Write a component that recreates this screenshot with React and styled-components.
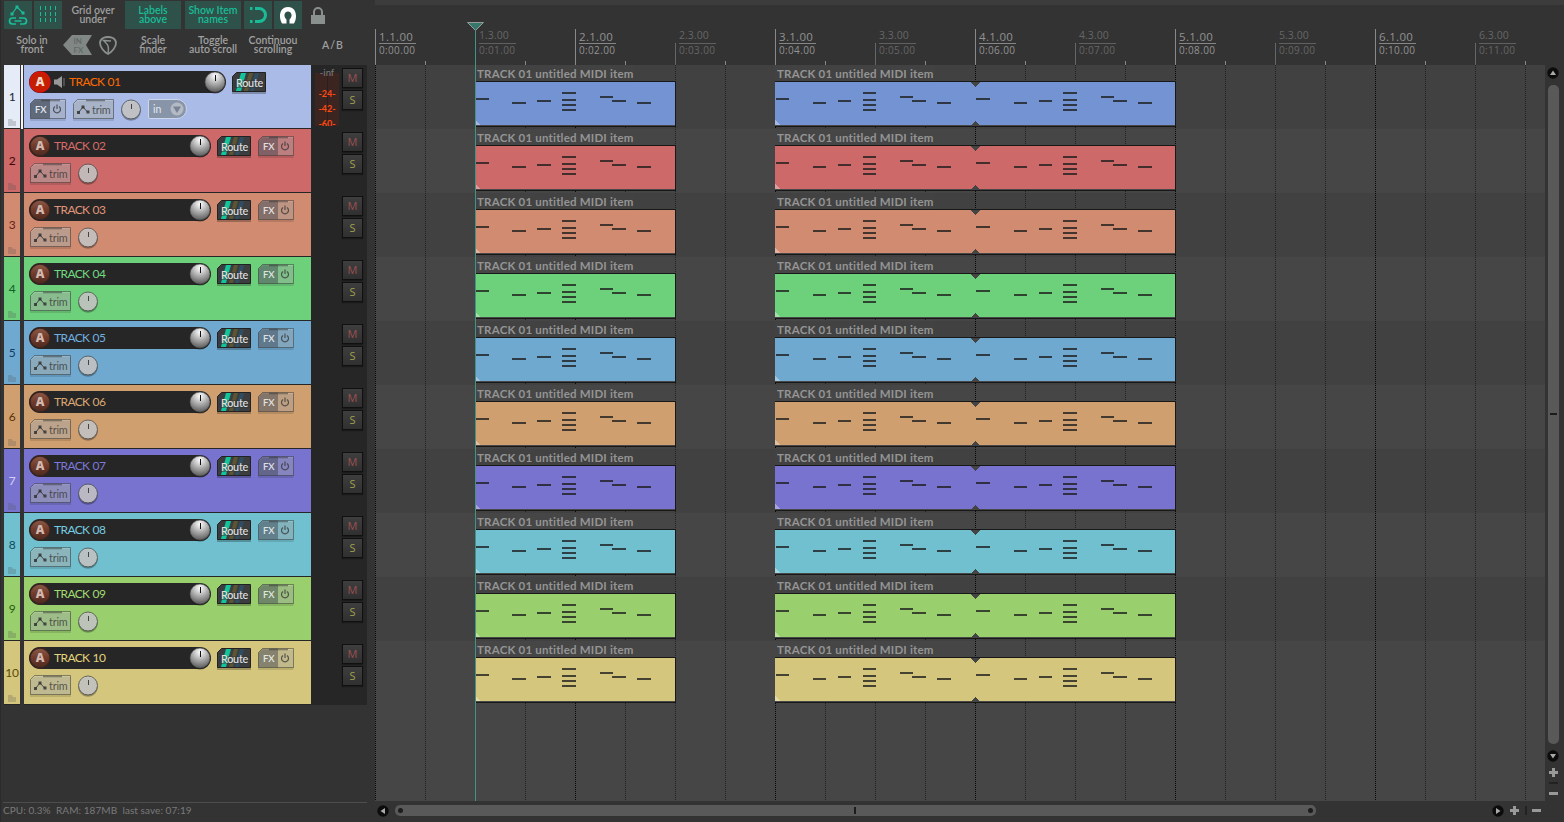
import React from "react";
import styled, { createGlobalStyle } from "styled-components";

const GlobalStyle = createGlobalStyle`
	* {
		box-sizing: border-box;
	}
	body {
		margin: 0;
		background: #333;
		overflow: hidden;
	}
	svg {
		display: block;
		flex: none;
	}
`;

const AppCSS = styled.div`
	width: 1564px;
	height: 822px;
	display: flex;
	overflow: hidden;
	background: #333;
	border-left: 1px solid #2b2b2b;
	font-family: Lato, "Liberation Sans", sans-serif;
	white-space: nowrap;
`;

const LeftPanel = styled.div`
	width: 374px;
	flex: none;
	display: flex;
	flex-direction: column;
`;

// ---------- toolbar ----------

const Toolbar = styled.div`
	height: 65px;
	padding: 1px 0 0 3px;
	display: flex;
	flex-direction: column;
	gap: 2px;
`;

const ToolbarRow = styled.div`
	display: flex;
	height: 28px;
`;

const ToolButton = styled.div`
	width: ${(p) => p.$w || 28}px;
	margin-right: ${(p) => (p.$gap === undefined ? 2 : p.$gap)}px;
	height: 28px;
	flex: none;
	display: flex;
	flex-direction: column;
	align-items: center;
	justify-content: center;
	background: ${(p) => (p.$on ? "#2e5149" : "transparent")};
	color: ${(p) => (p.$on ? "#1abc98" : "#a0a0a0")};
	font-size: 10.5px;
	font-weight: 600;
	line-height: 9px;
	letter-spacing: ${(p) => p.$ls || 0}px;
`;

// ---------- track control panel ----------

const TrackList = styled.div`
	display: flex;
	flex-direction: column;
	height: 640px;
	padding-left: 3px;
`;

const TrackRow = styled.div`
	display: flex;
	width: 363px;
	height: 64px;
	background: #262626;
`;

const NumberCell = styled.div`
	width: 16px;
	height: 63px;
	position: relative;
	display: flex;
	align-items: center;
	justify-content: center;
	background: ${(p) => p.$bg};
	color: ${(p) => p.$color};
	font-size: 12px;
	letter-spacing: -0.3px;
`;

const Folder = styled.svg`
	position: absolute;
	left: 4px;
	bottom: 2px;
`;

const Divider = styled.div`
	width: 4px;
	height: 64px;
	background: ${(p) => (p.$selected ? "#f2f4fa" : "#333")};
	border-left: 1px solid #333;
	border-right: 1px solid #333;
`;

const TrackBody = styled.div`
	width: 287px;
	height: 63px;
	padding: 6px 0 0 5px;
	background: ${(p) => p.$bg};
`;

const BodyRow = styled.div`
	display: flex;
	height: ${(p) => p.$h}px;
`;

const NameBar = styled.div`
	width: ${(p) => p.$w}px;
	height: 22px;
	display: flex;
	align-items: center;
	justify-content: space-between;
	border-radius: 11px;
	background: #262626;
`;

const NameLeft = styled.div`
	display: flex;
	align-items: center;
	gap: 3px;
	color: ${(p) => p.$color};
	font-size: 12px;
`;

const TrackName = styled.span`
	padding-bottom: 2px;
	letter-spacing: -0.6px;
	word-spacing: 0.6px;
`;

const ChamferButton = styled.div`
	position: relative;
	width: ${(p) => p.$w}px;
	height: 20px;
	margin: ${(p) => p.$m || "0"};
	flex: none;
	display: flex;
	align-items: center;
	color: ${(p) => p.$color};
	font-size: ${(p) => p.$size || 11}px;
`;

const Frame = styled.svg`
	position: absolute;
	inset: 0;
	overflow: visible;
`;

const ButtonText = styled.span`
	position: relative;
	padding-left: ${(p) => p.$x}px;
	padding-top: 1px;
	letter-spacing: ${(p) => p.$ls || 0}px;
	font-weight: ${(p) => p.$weight || 400};
`;

const ButtonIcon = styled.svg`
	position: relative;
	margin-left: ${(p) => p.$x}px;
`;

const InputSelect = styled.div`
	width: 39px;
	height: 20px;
	margin-left: 6px;
	padding: 0 2px 0 4px;
	display: flex;
	align-items: center;
	justify-content: space-between;
	border: 1px solid #ccd7ee;
	border-radius: 2px 10px 10px 2px;
	background: #8894a8;
	color: #e3e8f2;
	font-size: 10.5px;
`;

const MeterStrip = styled.div`
	width: 30px;
	height: 64px;
	padding: 1px 0 0 4px;
`;

const MeterPeak = styled.div`
	width: 24px;
	height: 13px;
	margin-bottom: -6px;
	color: #777;
	font-size: 9.5px;
	font-weight: 500;
	line-height: 13px;
	text-align: center;
`;

const Meter = styled.div`
	width: 24px;
	height: 53px;
	padding-top: 13px;
	overflow: hidden;
	background: linear-gradient(90deg, #3c2420 12px, #2b1f1d 12px 13px, #3c2420 13px);
	color: #ff4a10;
	font-size: 9px;
	font-weight: 700;
	line-height: 15px;
	text-align: center;
`;

const MuteSolo = styled.div`
	padding: 3px 0 0 1px;
	display: flex;
	flex-direction: column;
	gap: 2px;
`;

const SmallButton = styled.div`
	width: 21px;
	height: 20px;
	display: flex;
	justify-content: center;
	border: 1px solid #101010;
	background: linear-gradient(#3e3e3e, #303030);
	box-shadow: 0 1px 1px #1a1a1a;
	color: ${(p) => p.$color};
	font-family: "Open Sans", sans-serif;
	font-size: 11px;
	font-weight: 500;
	line-height: 17px;
`;

const StatusBar = styled.div`
	width: 364px;
	height: 20px;
	margin: auto 0 0 2px;
	padding-top: 1px;
	border-top: 1px solid #4c4e4d;
	color: #7a7a7a;
	font-size: 10px;
	line-height: 13px;
	letter-spacing: 0.07px;
	white-space: pre;
`;

// ---------- arrange view ----------

const Arrange = styled.div`
	position: relative;
	width: 1170px;
	flex: none;
	display: flex;
	flex-direction: column;
`;

const RulerTop = styled.div`
	height: 5px;
	width: 1189px;
	background: #3c3c3c;
`;

const Ruler = styled.div`
	height: 60px;
	display: flex;
	align-items: flex-end;
`;

const RulerCell = styled.div`
	width: 50px;
	height: 60px;
	flex: none;
	display: flex;
	align-items: flex-end;
`;

const Tick = styled.div`
	width: 1px;
	flex: none;
	height: ${(p) => p.$h}px;
	background: ${(p) => p.$color};
`;

const RulerLabel = styled.div`
	width: 37px;
	flex: none;
	height: 36px;
	margin-left: 3px;
	color: ${(p) => (p.$major ? "#929292" : "#666")};
	font-family: "Open Sans", sans-serif;
	font-size: 10px;
`;

const Bars = styled.div`
	height: 15px;
	border-bottom: 1px solid ${(p) => (p.$major ? "#858585" : "#606060")};
	line-height: ${(p) => (p.$major ? 16 : 13)}px;
	font-size: ${(p) => (p.$major ? 11.5 : 10.5)}px;
	letter-spacing: ${(p) => (p.$major ? 0.3 : 0.05)}px;
`;

const Time = styled.div`
	line-height: 12px;
	letter-spacing: 0.35px;
`;

// grid lines and lanes share one grid cell, so the items lie over the lines
const Canvas = styled.div`
	display: grid;
	height: 736px;
	overflow: hidden;
	background: #464646;
`;

const GridLines = styled.div`
	grid-area: 1 / 1;
	display: flex;
	overflow: hidden;
`;

const GridLine = styled.div`
	width: 50px;
	flex: none;
	background: repeating-linear-gradient(${(p) => p.$color} 0 1px, transparent 1px 2px) 0 0 / 1px 100% no-repeat;
`;

const Lanes = styled.div`
	grid-area: 1 / 1;
	z-index: 1;
`;

const Lane = styled.div`
	height: 64px;
	padding-left: 100px;
	display: flex;
	gap: 100px;
	background: ${(p) => (p.$odd ? "rgba(0, 0, 0, 0.06)" : "transparent")};
`;

const ItemCSS = styled.div`
	width: ${(p) => p.$w}px;
`;

const ItemLabel = styled.div`
	width: 159px;
	height: 16px;
	padding-left: 2px;
	background: ${(p) => (p.$odd ? "#424242" : "#464646")};
	color: #949494;
	font-size: 11.5px;
	font-weight: 700;
	line-height: 18px;
	letter-spacing: 0.2px;
`;

const Playhead = styled.div`
	position: absolute;
	left: 92px;
	top: 22px;
	width: 17px;
	height: 779px;
	z-index: 2;
	display: flex;
	flex-direction: column;
	align-items: center;
`;

const PlayheadLine = styled.div`
	width: 1px;
	flex: 1;
	background: #429583;
`;

// ---------- scrollbars ----------

const HScroll = styled.div`
	height: 21px;
	padding: 0 4px 2px 2px;
	display: flex;
	align-items: center;
`;

const HThumb = styled.div`
	width: 921px;
	height: 11px;
	margin: 0 176px 0 6px;
	padding: 0 3px;
	display: flex;
	align-items: center;
	justify-content: space-between;
	border-radius: 5px;
	background: #595959;
`;

const Dot = styled.div`
	width: 5px;
	height: 5px;
	border-radius: 50%;
	background: #1c1c1c;
`;

const Mark = styled.div`
	width: ${(p) => p.$w}px;
	height: ${(p) => p.$h}px;
	margin: ${(p) => p.$m || "0"};
	flex: none;
	background: ${(p) => p.$color || "#1c1c1c"};
`;

const VScroll = styled.div`
	width: 19px;
	padding: 67px 3px 0 0;
	display: flex;
	flex-direction: column;
	align-items: center;
`;

const VThumb = styled.div`
	width: 11px;
	height: 659px;
	margin: 6px 0;
	display: flex;
	align-items: center;
	justify-content: center;
	border-radius: 5px;
	background: #595959;
`;

const TRACKS = [
	{ name: "TRACK 01", head: "#a9bbe6", item: "#7493d2", text: "#ff6a00", num: "#20242c", selected: true },
	{ name: "TRACK 02", head: "#cd6969", item: "#cd6969", text: "#d86a66", num: "#3c0808" },
	{ name: "TRACK 03", head: "#d08b70", item: "#d08b70", text: "#e0957a", num: "#6a2010" },
	{ name: "TRACK 04", head: "#6dd07b", item: "#6dd07b", text: "#70da80", num: "#12602a" },
	{ name: "TRACK 05", head: "#6fa9d0", item: "#6fa9d0", text: "#70b0e0", num: "#123c62" },
	{ name: "TRACK 06", head: "#cf9f70", item: "#cf9f70", text: "#dca874", num: "#5c3008" },
	{ name: "TRACK 07", head: "#7773cf", item: "#7773cf", text: "#7c78dc", num: "#d4d2f4" },
	{ name: "TRACK 08", head: "#70c0cf", item: "#70c0cf", text: "#74cce0", num: "#104a58" },
	{ name: "TRACK 09", head: "#99cf6d", item: "#99cf6d", text: "#a0dc70", num: "#2c5c10" },
	{ name: "TRACK 10", head: "#d4c67d", item: "#d4c67d", text: "#e4d47c", num: "#5c4a08" },
];

// [x, y, width] from the top left of the item
const SHORT_NOTES = [
	[1, 17, 13], [37, 21, 14], [62, 19, 14], [87, 11, 14], [87, 18, 14], [87, 23, 14],
	[87, 28, 14], [125, 15, 13], [137, 19, 14], [162, 21, 14],
];
const LONG_NOTES = [
	[1, 17, 13], [38, 21, 13], [63, 19, 13], [88, 11, 13], [88, 18, 13], [88, 23, 13],
	[88, 28, 13], [125, 15, 13], [137, 19, 14], [162, 21, 14],
	[201, 17, 14], [239, 21, 13], [264, 19, 13], [288, 11, 14], [288, 18, 14], [288, 23, 14],
	[288, 28, 14], [326, 15, 13], [338, 19, 14], [363, 21, 14],
];

const MidiItem = ({ width, color, notes, looped, odd }) => (
	<ItemCSS $w={width}>
		<ItemLabel $odd={odd}>TRACK 01 untitled MIDI item</ItemLabel>
		<svg width={width + 1} height="46" shapeRendering="crispEdges">
			<rect width={width + 1} height="46" fill="#181818" />
			<rect y="1" width={width} height="43" fill={color} />
			<rect y="44" width={width} height="1" fill="#484848" />
			{notes.map(([x, y, w], i) => (
				<rect key={i} x={x} y={y} width={w} height="2" fill="#1c1c1c" opacity="0.78" />
			))}
			<path d="M0 39l5 5H0z" fill="#fff" opacity="0.35" />
			{looped && <path d="M195.500 1h10l-5 5zM195.500 45h10l-5-5z" fill="#444" />}
		</svg>
	</ItemCSS>
);

const ArmButton = ({ armed }) => (
	<svg width="22" height="22" viewBox="0 0 22 22">
		<defs>
			<linearGradient id="armOff" x1="0" y1="0" x2="0" y2="1">
				<stop offset="0" stopColor="#8a5a48" />
				<stop offset="0.5" stopColor="#703a2a" />
				<stop offset="1" stopColor="#4c2a20" />
			</linearGradient>
		</defs>
		<circle cx="11" cy="11" r="10" fill={armed ? "#c42000" : "url(#armOff)"} stroke={armed ? "#e01010" : "#3a2420"} strokeWidth="1.4" />
		<text x="11" y="15" textAnchor="middle" fontFamily="Open Sans" fontSize="12" fontWeight="800" fill={armed ? "#f4d8cc" : "#d0b8b0"}>
			A
		</text>
	</svg>
);

const Speaker = () => (
	<svg width="12" height="14" viewBox="0 0 12 14">
		<path d="M0 4.500h3L8 1v12L3 9.500H0z" fill="#999" />
		<path d="M10 3v8" stroke="#777" fill="none" />
	</svg>
);

const VolumeKnob = () => (
	<svg width="22" height="23" viewBox="0 0 22 23">
		<defs>
			<radialGradient id="vol" cx="0.5" cy="0.2" r="0.8">
				<stop offset="0" stopColor="#fff" />
				<stop offset="0.5" stopColor="#adadad" />
				<stop offset="1" stopColor="#5c5c5c" />
			</radialGradient>
		</defs>
		<circle cx="11" cy="12" r="10.500" fill="#1a1a1a" opacity="0.6" />
		<circle cx="11" cy="11" r="10" fill="url(#vol)" stroke="#555" strokeWidth="0.6" />
		<path d="M11.500 4v6" stroke="#111" />
	</svg>
);

const PanKnob = () => (
	<svg width="22" height="22" viewBox="0 0 22 22">
		<circle cx="11" cy="12" r="9.800" fill="#000" opacity="0.3" />
		<circle cx="11" cy="10.500" r="9.500" fill="#ccc" opacity="0.85" stroke="#555" />
		<path d="M11.500 5v5" stroke="#444" />
	</svg>
);

const RouteButton = () => (
	<ChamferButton $w={34} $m="1px 0 0 6px" $color="#e2e2e2" $size={10.8}>
		<Frame width="34" height="20" viewBox="0 0 34 20">
			<path d="M4 2h30v20H0V6z" fill="#000" opacity="0.25" />
			<path d="M4.500.5h29v19H.5v-15z" fill="#3b3d3f" stroke="#222" />
			<path d="M9 1h5l-5 18H4z" fill="#12c49c" />
			<path d="M17 1h4l-5 18h-4z" fill="#6a6030" opacity="0.7" />
			<path d="M23 1h4l-5 18h-4z" fill="#2c5470" opacity="0.7" />
			<path d="M2 8h30v8H2z" fill="#34373a" opacity="0.5" />
		</Frame>
		<ButtonText $x={4} $ls={-0.25} $weight={500}>Route</ButtonText>
	</ChamferButton>
);

const FxButton = ({ m, selected }) => (
	<ChamferButton $w={36} $m={m} $color={selected ? "#e4e8f0" : "#ffffffcc"} $size={9.5}>
		<Frame width="36" height="20" viewBox="0 0 36 20">
			<path d="M4.500 2h31v20H0V6z" fill="#000" opacity="0.12" />
			<path d="M4.500.5h31v19H.5v-15z" fill="#d0d0d0" fillOpacity="0.3" />
			<path d="M4.500.5H20v19H.5v-15z" fill="#333a44" fillOpacity={selected ? 0.6 : 0.42} />
			<path d="M4.500.5h31v19H.5v-15z" fill="none" stroke="#333" strokeOpacity="0.5" />
			<path d="M11 1.500h19" stroke="#333" strokeWidth="1.500" opacity="0.5" />
		</Frame>
		<ButtonText $x={5} $weight={600}>FX</ButtonText>
		<ButtonIcon $x={5} width="10" height="10" viewBox="0 0 10 10">
			<path d="M3 2.500a3.500 3.500 0 1 0 4 0M5 .5v4.500" fill="none" stroke="#333" strokeWidth="1.200" opacity="0.75" />
		</ButtonIcon>
	</ChamferButton>
);

const TrimButton = ({ m }) => (
	<ChamferButton $w={41} $m={m} $color="#333333c4" $size={10.8}>
		<Frame width="41" height="20" viewBox="0 0 41 20">
			<path d="M4.500 2h36.500v20H0V6z" fill="#000" opacity="0.12" />
			<path d="M4.500.5h36v19H.5v-15z" fill="#c4c8c4" fillOpacity="0.42" stroke="#333" strokeOpacity="0.5" />
			<path d="M13 1.500h19" stroke="#333" strokeWidth="1.500" opacity="0.5" />
		</Frame>
		<ButtonIcon $x={4} width="13" height="10" viewBox="0 0 13 10">
			<path d="M1.500 8.500L6 3l4.500 5" fill="none" stroke="#333" strokeWidth="1" opacity="0.85" />
			<path d="M0 7h3v3H0zM4.500 1.500h3v3h-3zM9.500 6.500h3v3h-3z" fill="#333" opacity="0.85" />
		</ButtonIcon>
		<ButtonText $x={2} $ls={-0.2}>trim</ButtonText>
	</ChamferButton>
);

const Track = ({ track, index }) => {
	const { selected } = track;
	return (
		<TrackRow>
			<NumberCell $bg={selected ? "#e6ebf8" : track.head} $color={track.num}>
				{index + 1}
				<Folder width="8" height="7" viewBox="0 0 8 7">
					<path d="M0 0h4l1 2h3v5H0z" fill="#555" opacity="0.25" />
				</Folder>
			</NumberCell>
			<Divider $selected={selected} />
			<TrackBody $bg={track.head}>
				<BodyRow $h={28}>
					<NameBar $w={selected ? 197 : 182}>
						<NameLeft $color={track.text}>
							<ArmButton armed={selected} />
							{selected && <Speaker />}
							<TrackName>{track.name}</TrackName>
						</NameLeft>
						<VolumeKnob />
					</NameBar>
					<RouteButton />
					{!selected && <FxButton m="1px 0 0 7px" />}
				</BodyRow>
				<BodyRow $h={22}>
					{selected && <FxButton m="0 0 0 1px" selected />}
					<TrimButton m={selected ? "0 6px 0 7px" : "0 6px 0 1px"} />
					<PanKnob />
					{selected && (
						<InputSelect>
							in
							<svg width="14" height="14" viewBox="0 0 14 14">
								<circle cx="7" cy="7" r="6.500" fill="#b4bac4" />
								<path d="M3 4.500h8L7 11z" fill="#788294" />
							</svg>
						</InputSelect>
					)}
				</BodyRow>
			</TrackBody>
			<MeterStrip>
				{selected && (
					<>
						<MeterPeak>-inf</MeterPeak>
						<Meter>
							<div>-24-</div>
							<div>-42-</div>
							<div>-60-</div>
						</Meter>
					</>
				)}
			</MeterStrip>
			<MuteSolo>
				<SmallButton $color="#9c5050">M</SmallButton>
				<SmallButton $color="#a0a050">S</SmallButton>
			</MuteSolo>
		</TrackRow>
	);
};

const RoundButton = ({ d }) => (
	<svg width="12" height="12" viewBox="0 0 12 12">
		<circle cx="6" cy="6" r="5.700" fill="#0c0c0c" />
		<path d={d} fill="#aaa" />
	</svg>
);

const Plus = () => (
	<svg width="9" height="9" shapeRendering="crispEdges">
		<path d="M3 0h3v3h3v3H6v3H3V6H0V3h3z" fill="#999" />
	</svg>
);

const RULER = Array.from({ length: 24 }, (_, i) => i);

const gridColor = (i) => (i % 4 === 0 ? "#080808" : "#222");

const App = () => {
	return (
		<AppCSS>
			<GlobalStyle />
			<LeftPanel>
				<Toolbar>
					<ToolbarRow>
						<ToolButton $on>
							<svg width="20" height="22" viewBox="0 0 20 22" fill="none" stroke="#1abc98">
								<path d="M4 10l5-7 6 6" strokeWidth="1.200" />
								<path d="M2.500 8.500h3v3h-3zM7.500 1.500h3v3h-3zM13.500 7.500h3v3h-3z" fill="#1abc98" stroke="none" />
								<path d="M8 14H4.500a3 3 0 0 0 0 6H8M11 14h4.500a3 3 0 0 1 0 6H12M6.500 17h7" strokeWidth="1.700" />
							</svg>
						</ToolButton>
						<ToolButton $on>
							<svg width="18" height="18" viewBox="0 0 18 18" stroke="#1abc98" strokeDasharray="4 2">
								<path d="M1.500 0v18M6.500 0v18M11.500 0v18M16.500 0v18" />
							</svg>
						</ToolButton>
						<ToolButton $w={58} $gap={3}>
							<span>Grid over</span>
							<span>under</span>
						</ToolButton>
						<ToolButton $on $w={56} $gap={4}>
							<span>Labels</span>
							<span>above</span>
						</ToolButton>
						<ToolButton $on $w={56} $gap={3}>
							<span>Show Item</span>
							<span>names</span>
						</ToolButton>
						<ToolButton $on>
							<svg width="18" height="18" viewBox="0 0 18 18" fill="none" stroke="#1abc98" strokeWidth="3">
								<path d="M6 2.500h4a6.500 6.500 0 0 1 0 13H6M1 2.500h2.500M1 15.500h2.500" />
							</svg>
						</ToolButton>
						<ToolButton $on $gap={1}>
							<svg width="18" height="18" viewBox="0 0 18 18">
								<path d="M3 17.500C-.5 12 0 1 9 1s9.500 11 6 16.500h-4.500v-4c4-4 1.500-8-1.500-8s-5.500 4-1.500 8v4z" fill="#fff" />
							</svg>
						</ToolButton>
						<ToolButton $w={30} $gap={0}>
							<svg width="14" height="17" viewBox="0 0 14 17">
								<path d="M0 8h14v9H0z" fill="#8a908d" />
								<path d="M3 8V5a4 4 0 0 1 8 0v3" fill="none" stroke="#8a908d" strokeWidth="2" />
							</svg>
						</ToolButton>
					</ToolbarRow>
					<ToolbarRow>
						<ToolButton $w={56}>
							<span>Solo in</span>
							<span>front</span>
						</ToolButton>
						<ToolButton $w={30} $gap={4}>
							<svg width="29" height="20" viewBox="0 0 29 20">
								<path d="M9 0h20l-6 10 6 10H9L0 10z" fill="#808784" />
								<text x="10.500" y="9" fontSize="8" fill="#626866">IN</text>
								<text x="10.500" y="17.500" fontSize="8" fill="#626866">FX</text>
							</svg>
						</ToolButton>
						<ToolButton $w={24} $gap={3}>
							<svg width="18" height="19" viewBox="0 0 18 19" fill="none" stroke="#8a908d" strokeWidth="1.800">
								<path d="M9 18C5 16 1 11 1 7q0-3 3-5 5-2 10 0 3 2 3 5c0 4-4 9-8 11z" />
								<path d="M9 17C10 12 9.500 9 7 7L4.500 4.500l7.500.5" strokeWidth="1.500" />
							</svg>
						</ToolButton>
						<ToolButton $w={60} $gap={0}>
							<span>Scale</span>
							<span>finder</span>
						</ToolButton>
						<ToolButton $w={60} $gap={0}>
							<span>Toggle</span>
							<span>auto scroll</span>
						</ToolButton>
						<ToolButton $w={60} $gap={0}>
							<span>Continuou</span>
							<span>scrolling</span>
						</ToolButton>
						<ToolButton $w={60} $gap={0} $ls={1}>
							<span>A/B</span>
						</ToolButton>
					</ToolbarRow>
				</Toolbar>
				<TrackList>
					{TRACKS.map((track, i) => (
						<Track key={track.name} track={track} index={i} />
					))}
				</TrackList>
				<StatusBar>CPU: 0.3%  RAM: 187MB  last save: 07:19</StatusBar>
			</LeftPanel>
			<Arrange>
				<RulerTop />
				<Ruler>
					{RULER.map((i) => {
						const major = i % 4 === 0;
						if (i % 2) {
							return (
								<RulerCell key={i}>
									<Tick $h={4} $color="#888" />
								</RulerCell>
							);
						}
						return (
							<RulerCell key={i}>
								<Tick $h={major ? 36 : 22} $color={major ? "#888" : "#666"} />
								<RulerLabel $major={major}>
									<Bars $major={major}>{`${Math.floor(i / 4) + 1}.${major ? 1 : 3}.00`}</Bars>
									<Time>{`0:${String(i / 2).padStart(2, "0")}.00`}</Time>
								</RulerLabel>
							</RulerCell>
						);
					})}
				</Ruler>
				<Canvas>
					<GridLines>
						{RULER.map((i) => (
							<GridLine key={i} $color={gridColor(i)} />
						))}
					</GridLines>
					<Lanes>
						{TRACKS.map((track, i) => (
							<Lane key={track.name} $odd={i % 2 === 0}>
								<MidiItem width={200} color={track.item} notes={SHORT_NOTES} odd={i % 2 === 0} />
								<MidiItem width={400} color={track.item} notes={LONG_NOTES} odd={i % 2 === 0} looped />
							</Lane>
						))}
					</Lanes>
				</Canvas>
				<Playhead>
					<svg width="17" height="9" viewBox="0 0 17 9">
						<path d="M.5.5h16l-8 8z" fill="#35776a" stroke="#999" />
					</svg>
					<PlayheadLine />
				</Playhead>
				<HScroll>
					<RoundButton d="M8 3v6L3.500 6z" />
					<HThumb>
						<Dot />
						<Mark $w={2} $h={7} $m="0 2px 0 0" />
						<Dot />
					</HThumb>
					<RoundButton d="M4 3v6l4.500-3z" />
					<Mark $w={6} $h={0} />
					<Plus />
					<Mark $w={2} $h={9} $color="#222" $m="0 5px 0 6px" />
					<Mark $w={9} $h={3} $color="#999" />
				</HScroll>
			</Arrange>
			<VScroll>
				<RoundButton d="M3 8h6L6 3.500z" />
				<VThumb>
					<Mark $w={7} $h={2} $m="0 0 2px" />
				</VThumb>
				<RoundButton d="M3 4h6L6 8.500z" />
				<Mark $w={0} $h={6} />
				<Plus />
				<Mark $w={9} $h={2} $color="#222" $m="5px 0 8px" />
				<Mark $w={9} $h={3} $color="#999" />
			</VScroll>
		</AppCSS>
	);
};

export default App;
